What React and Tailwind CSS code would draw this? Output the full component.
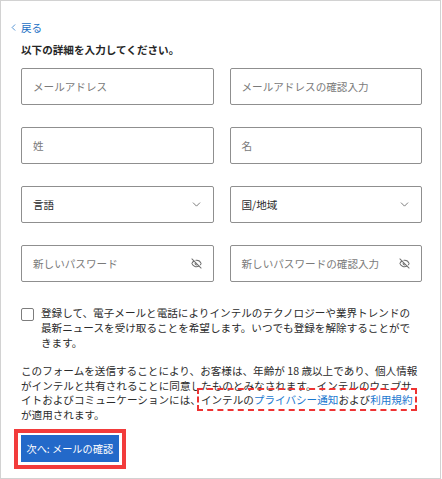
import React from 'react';
import { ChevronLeft, ChevronDown, EyeOff } from 'lucide-react';

const font = { fontFamily: '"Noto Sans CJK JP", "Noto Sans", sans-serif' };

function TextField({ placeholder, eye }) {
  return (
    <div className="h-[37px] border border-[#8f8f8f] rounded-[2px] flex items-center justify-between pl-[11px] pr-[11px]">
      <span className="text-[#7a7a7a]">{placeholder}</span>
      {eye && <EyeOff size={11} strokeWidth={2.2} className="text-[#707070]" />}
    </div>
  );
}

function SelectField({ value }) {
  return (
    <div className="h-[37px] border border-[#8f8f8f] rounded-[2px] flex items-center justify-between pl-[11px] pr-[10px]">
      <span className="text-[#2b2b2b]">{value}</span>
      <ChevronDown size={13} strokeWidth={1.4} className="text-[#555]" />
    </div>
  );
}

export default function App() {
  return (
    <div
      className="w-[441px] h-[479px] border border-[#d2d2d2] bg-white text-[10.6px] leading-[15px] text-[#2b2b2b]"
      style={font}
    >
      <div className="w-[401px] ml-[20px] pt-[19px]">
        {/* back link */}
        <div className="flex items-center text-[#1a6fc4] -ml-[13px]">
          <ChevronLeft size={11} strokeWidth={1.6} className="mr-[2px]" />
          <span>戻る</span>
        </div>

        <h2 className="mt-[7px] font-bold text-[#262626]">以下の詳細を入力してください。</h2>

        {/* form fields */}
        <div className="mt-[11px] grid grid-cols-2 gap-x-[16px] gap-y-[22px]">
          <TextField placeholder="メールアドレス" />
          <TextField placeholder="メールアドレスの確認入力" />
          <TextField placeholder="姓" />
          <TextField placeholder="名" />
          <SelectField value="言語" />
          <SelectField value="国/地域" />
          <TextField placeholder="新しいパスワード" eye />
          <TextField placeholder="新しいパスワードの確認入力" eye />
        </div>

        {/* opt-in */}
        <div className="mt-[23px] flex items-start gap-[7px]">
          <div className="mt-[3px] w-[13px] h-[13px] shrink-0 border border-[#7d7d7d] rounded-[2px]" />
          <p className="w-[376px]">
            登録して、電子メールと電話によりインテルのテクノロジーや業界トレンドの最新ニュースを受け取ることを希望します。いつでも登録を解除することができます。
          </p>
        </div>

        <p className="mt-[14px] leading-[14.7px]">
          このフォームを送信することにより、お客様は、年齢が 18 歳以上であり、個人情報がインテルと共有されることに同意したものとみなされます。インテルのウェブサイトおよびコミュニケーションには、
          <span className="outline-2 outline-dashed outline-[#ee3333] outline-offset-2">
            インテルの<span className="text-[#1a78d0]">プライバシー通知</span>および<span className="text-[#1a78d0]">利用規約</span>
          </span>
          が適用されます。
        </p>

        {/* submit */}
        <div className="mt-[6px] -ml-[7px] inline-block border-4 border-[#f23b3b] p-[2.5px]">
          <button className="h-[27px] px-[6px] bg-[#2369c9] text-white text-[10.2px] flex items-center">
            次へ: メールの確認
          </button>
        </div>
      </div>
    </div>
  );
}
